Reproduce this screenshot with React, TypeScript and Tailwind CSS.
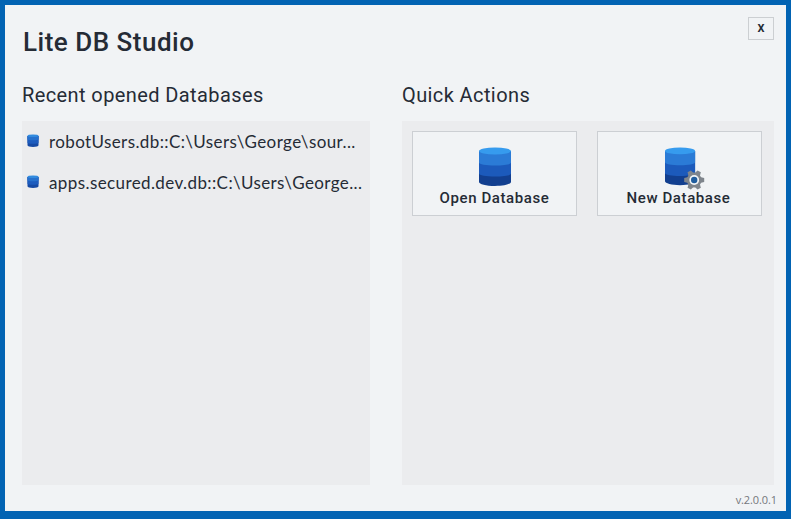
const ink = 'text-[#252b35]';
const din = "font-['Roboto','Liberation_Sans',sans-serif]";
const humanist = "font-['Lato','Noto_Sans',sans-serif]";

function Cylinder() {
  return (
    <>
      <path d="M0 4v31c0 2 7 4 16 4s16-2 16-4V4z" fill="#123f8f" />
      <path d="M0 4v22.500c0 2 7 3 16 3s16-1 16-3V4z" fill="#1c5abb" />
      <path d="M0 4v11.500c0 2 7 3 16 3s16-1 16-3V4z" fill="#2b7bd6" />
      <ellipse cx="16" cy="4" rx="16" ry="3.500" fill="#369bee" />
    </>
  );
}

function DatabaseIcon({ className }: { className: string }) {
  return (
    <svg viewBox="0 0 32 39" preserveAspectRatio="none" className={className}>
      <Cylinder />
    </svg>
  );
}

function SmallDatabaseIcon() {
  return (
    <svg viewBox="0 0 12 13" className="mb-[2px] h-[13px] w-[12px] shrink-0">
      <path d="M.5 2v9.300C.5 12.300 3 13 6 13s5.500-.7 5.500-1.700V2z" fill="#164aa4" />
      <path d="M.5 2v6.700c0 .7 2.500 1 5.500 1s5.500-.3 5.500-1V2z" fill="#1d5cbe" />
      <path d="M.5 2v3.300c0 .7 2.500 1 5.500 1s5.500-.3 5.500-1V2z" fill="#2671cd" />
      <ellipse cx="6" cy="1.800" rx="5.500" ry="1.300" fill="#328bdf" />
    </svg>
  );
}

function DatabaseGearIcon() {
  return (
    <svg viewBox="0 0 40 43" className="h-[43px] w-[40px]">
      <g transform="scale(.94 .98)">
        <Cylinder />
      </g>
      <g transform="translate(29.200 33)">
        {[30, 90, 150].map((angle) => (
          <path
            key={angle}
            d="M-1.900-10h3.800l1.100 4v12l-1.100 4h-3.800l-1.100-4V-6z"
            fill="#7f858c"
            transform={`rotate(${angle})`}
          />
        ))}
        <circle r="7.400" fill="#7f858c" />
        <circle r="4.900" fill="#f1f4f6" />
        <circle r="3.200" fill="#205d9e" />
      </g>
    </svg>
  );
}

function RecentItem({ name }: { name: string }) {
  return (
    <li className="flex h-[41px] items-center pl-[5px]">
      <SmallDatabaseIcon />
      <span className={`ml-[10px] whitespace-nowrap text-[17px] leading-[22px] tracking-[0.4px] ${humanist}`}>{name}</span>
    </li>
  );
}

export default function App() {
  return (
    <div className={`flex h-[519px] w-[791px] flex-col overflow-hidden border-[5px] border-b-8 border-[#0263b3] bg-[#f1f3f5] ${din} ${ink}`}>
      <header className="flex h-[72px] shrink-0 justify-between pl-[18px] pr-[12px]">
        <h1 className="pt-[20px] text-[26px] font-medium leading-[34px] tracking-[0.5px]">Lite DB Studio</h1>
        <button className="mt-[12px] h-[23px] w-[26px] border border-[#cccfd2] pt-px text-[11px] font-bold leading-[20px]">X</button>
      </header>
      <main className="flex shrink-0 gap-[32px] pl-[17px]">
        <section className="w-[348px]">
          <h2 className="h-[44px] whitespace-nowrap text-[20px] leading-[36px] tracking-[0.4px]">Recent opened Databases</h2>
          <ul className="h-[364px] bg-[#ebecee]">
            <RecentItem name="robotUsers.db::C:\Users\George\sour..." />
            <RecentItem name="apps.secured.dev.db::C:\Users\George..." />
          </ul>
        </section>
        <section className="w-[372px]">
          <h2 className="h-[44px] whitespace-nowrap text-[20px] leading-[36px] tracking-[0.4px]">Quick Actions</h2>
          <div className="flex h-[364px] items-start gap-[20px] bg-[#ebecee] px-[10px] pt-[10px]">
            <button className="flex h-[85px] w-[165px] flex-col items-center border border-[#cccfd3] bg-[#f1f3f5] pt-[15px]">
              <DatabaseIcon className="h-[39px] w-[32px] shrink-0" />
              <span className="whitespace-nowrap text-[15px] font-medium leading-[24px] tracking-[0.6px]">Open Database</span>
            </button>
            <button className="flex h-[85px] w-[165px] flex-col items-center border border-[#cccfd3] bg-[#f1f3f5] pt-[15px]">
              <div className="ml-[11px] h-[39px] shrink-0">
                <DatabaseGearIcon />
              </div>
              <span className="mr-[2px] whitespace-nowrap text-[15px] font-medium leading-[24px] tracking-[0.6px]">New Database</span>
            </button>
          </div>
        </section>
      </main>
      <footer className="pr-[9px] pt-[7px] text-right font-['Open_Sans','Noto_Sans',sans-serif] text-[11px] leading-[16px] tracking-[-0.1px] text-[#74777c]">v.2.0.0.1</footer>
    </div>
  );
}
